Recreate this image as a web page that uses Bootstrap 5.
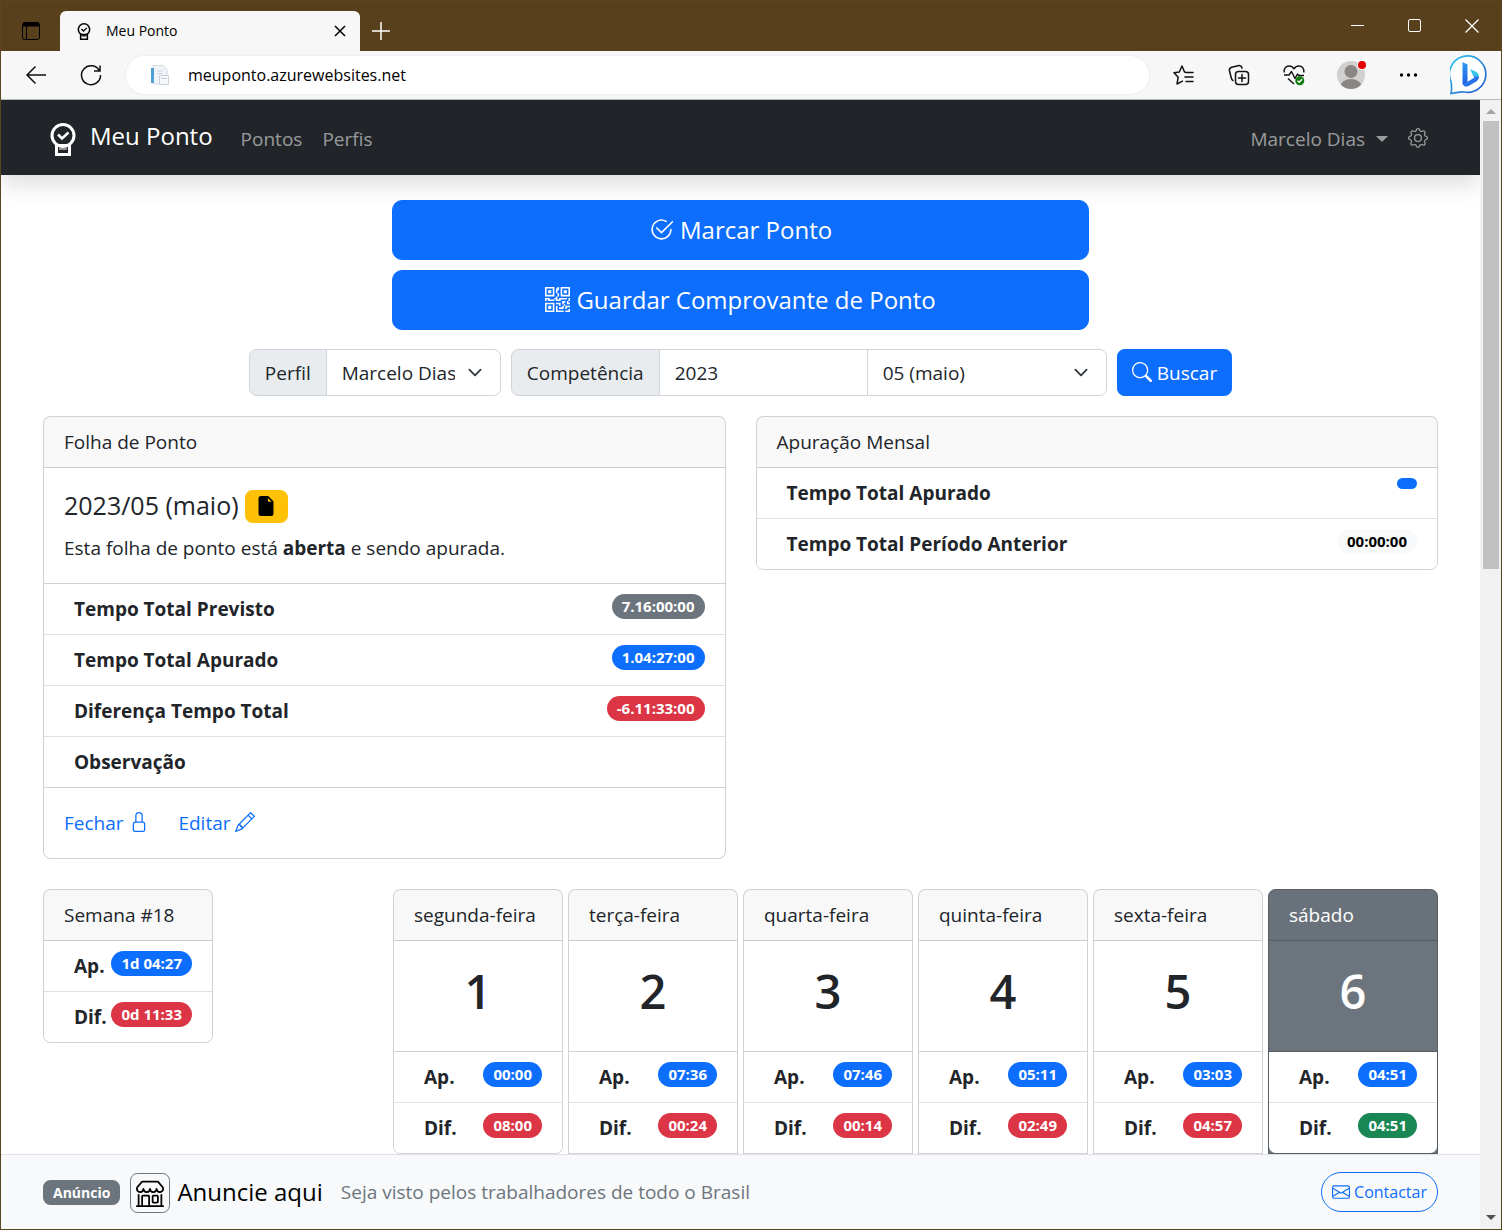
<!DOCTYPE html>
<html lang="pt-BR">
<head>
<meta charset="utf-8">
<meta name="viewport" content="width=device-width, initial-scale=1">
<title>Meu Ponto</title>
<link href="https://cdn.jsdelivr.net/npm/bootstrap@5.3.0/dist/css/bootstrap.min.css" rel="stylesheet">
<style>
:root { font-size: 20px; }
body { font-family: "Open Sans", "Noto Sans", sans-serif; font-size: 19px; line-height: 30px; }
.icon { width: 20px; height: 20px; fill: currentColor; vertical-align: -2px; }
.line-icon { fill: none; stroke: currentColor; }

/* Browser window */
.window-frame { height: 100vh; border: 1px solid #5b4520; }
.window-btn { background: none; border: 0; padding: 0; color: inherit; line-height: 0; }
.title-bar { height: 50px; background: #59401c; color: #fff; padding-right: 22px; }
.tab-menu { width: 59px; padding-left: 20px; }
.browser-tab { width: 300px; height: 40px; background: #f7f7f7; color: #000; border-radius: 6px 6px 0 0; font-size: 14px; padding: 0 13px 0 16px; }
.tab-label { margin-left: 14px; }
.new-tab { margin-left: 9px; padding-bottom: 8px; }
.window-controls { gap: 43px; }
.tool-bar { height: 49px; background: #f7f7f7; border-bottom: 1px solid #b9bcbf; padding: 0 13px 0 23px; color: #111; }
.nav-tools { gap: 31px; margin-right: 23px; }
.page-tools { gap: 31px; margin-left: 23px; }
.address-box { background: #fff; height: 38px; border-radius: 19px; padding-left: 22px; box-shadow: 0 0 3px rgba(0,0,0,.08); }
.address-box input { border: 0; outline: 0; background: none; font-size: 16px; line-height: 24px; color: #000; margin-left: 18px; }
.scroll-track { width: 21px; background: #f1f1f1; padding: 8px 2px 8px 3px; line-height: 0; }
.scroll-thumb { height: 448px; background: #c1c1c1; margin-top: 7px; }

/* Application */
.page-pad { padding-left: 42px; padding-right: 42px; }
.app-nav { height: 75px; padding-top: 12px; }
.app-nav .navbar-brand { font-size: 24px; line-height: 38px; margin-right: 18px; }
.brand-logo { width: 26px; height: 33px; margin: 2px 14px 0 7px; }
.app-nav .dropdown-toggle::after { margin-left: 11px; vertical-align: 4px; border-width: 6px 6px 0; }
.action-list { width: 50%; margin-top: 25px; }
.search-form { margin: 19px 0 20px; }
.summary-row { margin-bottom: 30px; }
.btn { --bs-btn-font-size: 19px; --bs-btn-line-height: 30px; }
.btn-lg { --bs-btn-font-size: 24px; --bs-btn-line-height: 38px; }
.btn-lg .icon { width: 25px; height: 25px; vertical-align: -3px; }
.search-btn { --bs-btn-padding-x: 14px; }
.input-group-text, .form-control, .form-select { font-size: 19px; line-height: 30px; padding-left: 15px; border-color: #ced4da; }
.input-group-text { padding-right: 15px; background: #e9ecef; }
.form-select { background-size: 20px 15px; }
.profile-group { width: 252px; }
.period-group { width: 596px; }
.year-field { max-width: 209px; }
.card-title { font-size: 25px; line-height: 35px; }
.title-badge { width: 43px; height: 33px; margin-left: 6px; }
.badge { font-size: 15px; line-height: 15px; padding: 5px 10px; }
.badge:empty { display: block; height: 11px; }
.list-group-item { --bs-list-group-border-color: #dee2e6; font-weight: 700; line-height: 30px; padding-left: 30px; }
.week-grid { display: grid; grid-template-columns: repeat(8, 1fr); gap: 5px; }
.day-number { font-size: 47px; line-height: 60px; font-weight: 600; }
.card-continued { border-bottom-left-radius: 0; border-bottom-right-radius: 0; }
.card-continued .list-group { border-radius: 0; }
.today-card { --bs-card-border-color: #565e64; }
.ad-bar { height: 75px; background: #f8f9fa; }
.ad-bar .ad-tag { font-size: 14px; }
.shop-box { width: 40px; height: 40px; border-color: #6c757d !important; margin: 2px 7px 0 10px; }
.ad-name { font-size: 24px; color: #000; margin-right: 18px; }
.contact-btn { --bs-btn-font-size: 16px; --bs-btn-padding-y: 4px; --bs-btn-padding-x: 10px; }
.contact-btn .icon { width: 18px; height: 18px; vertical-align: -3px; }
</style>
<script src="https://cdn.jsdelivr.net/npm/bootstrap@5.3.0/dist/js/bootstrap.bundle.min.js"></script>
</head>
<body>
<svg class="d-none">
  <symbol id="clock-logo" viewBox="0 0 26 33"><path d="M6.500 22.500h13v9h-13z" fill="none" stroke="currentColor" stroke-width="3"/><path d="M9 26h8" stroke="currentColor" stroke-width="1"/><circle cx="13" cy="12.500" r="11" fill="none" stroke="currentColor" stroke-width="3"/><path d="m8 11.500 4 4 6.500-6" fill="none" stroke="currentColor" stroke-width="2.500"/></symbol>
</svg>
<div class="window-frame d-flex flex-column overflow-hidden">
  <header>
    <div class="title-bar d-flex align-items-end">
      <button class="window-btn tab-menu align-self-center text-start pt-2 text-black" aria-label="Menu de guias"><svg width="20" height="20" viewBox="0 0 20 20" class="line-icon"><rect x="1.500" y="1.500" width="17" height="17" rx="2.500"/><path d="M2 3.500h16" stroke-width="4"/><path d="M5.500 5v13"/></svg></button>
      <div class="browser-tab d-flex align-items-center">
        <svg width="16" height="17"><use href="#clock-logo"/></svg>
        <span class="tab-label flex-grow-1">Meu Ponto</span>
        <button class="window-btn" aria-label="Fechar guia"><svg width="14" height="14" class="line-icon" stroke-width="1.500"><path d="m2 2 10 10M12 2 2 12"/></svg></button>
      </div>
      <button class="window-btn new-tab" aria-label="Nova guia"><svg width="24" height="24" class="line-icon" stroke-width="1.500"><path d="M12 3v18M3 12h18"/></svg></button>
      <div class="window-controls ms-auto d-flex align-self-center">
        <button class="window-btn" aria-label="Minimizar"><svg width="14" height="14" class="line-icon"><path d="M0 6.500h13"/></svg></button>
        <button class="window-btn" aria-label="Maximizar"><svg width="14" height="14" class="line-icon"><rect x=".5" y=".5" width="12" height="12" rx="1.500"/></svg></button>
        <button class="window-btn" aria-label="Fechar"><svg width="14" height="14" class="line-icon" stroke-width="1.300"><path d="m.5.5 13 13M13.500.5l-13 13"/></svg></button>
      </div>
    </div>
    <div class="tool-bar d-flex align-items-center">
      <div class="nav-tools d-flex">
        <button class="window-btn" aria-label="Voltar"><svg width="24" height="24" class="line-icon" stroke-width="1.500"><path d="M22 12H3M11.500 3.500 3 12l8.500 8.500"/></svg></button>
        <button class="window-btn" aria-label="Atualizar"><svg width="24" height="24" class="line-icon" stroke-width="1.500"><path d="M20.500 8A9.500 9.500 0 1 0 21.500 12M21 2.500V8h-6"/></svg></button>
      </div>
      <div class="address-box d-flex align-items-center flex-grow-1">
        <svg width="22" height="22"><path d="M5 1.500h10l4 4V20H5z" fill="#f1f4f9" stroke="#d5dae3"/><path d="M3 4h3v15H3z" fill="#4f9fd8"/><path d="M9 7h6M9 9.500h6" stroke="#cdd5e2"/><path d="M11.500 11.500h9v9h-9z" fill="#f6f8fb" stroke="#cad0dc"/><path d="M13 14.500h6" stroke="#c2cad8"/></svg>
        <input class="flex-grow-1 p-0" type="text" value="meuponto.azurewebsites.net" aria-label="Endereço">
      </div>
      <div class="page-tools d-flex align-items-center">
        <button class="window-btn" aria-label="Favoritos"><svg width="24" height="24" class="line-icon" stroke-width="1.500" stroke-linejoin="round" stroke-linecap="round"><path d="M14.500 9.500 12.500 9l-2.500-6-2.700 6-5.300.8 4.200 4.400L5 21l5.500-2.800M14.500 9.500H21M13 14h8M14 18.500h7"/></svg></button>
        <button class="window-btn" aria-label="Coleções"><svg width="24" height="24" class="line-icon" stroke-width="1.500" stroke-linecap="round"><rect x="8.500" y="8.500" width="13" height="13" rx="3"/><path d="M15 11.500v7M11.500 15h7M6 17.500C5 17 4.500 16 4.300 15L2.500 8C2 6 3 4.700 4.700 4.200L11 2.700c2-.5 3.500.3 4 2.500"/></svg></button>
        <button class="window-btn" aria-label="Desempenho"><svg width="24" height="24" class="line-icon" stroke-width="1.400" stroke-linejoin="round"><path d="M2.300 9.500C1.500 5.500 4 3 7 3c2.500 0 4 1.300 5 2.800C13 4.300 14.500 3 17 3c3 0 5.500 2.500 4.700 6.500M2 12h5l2.500-3.500 3.500 7 2.500-4.500 1 1.500H22M6 15.500l6 5.500"/><circle cx="17.800" cy="17.800" r="4.500" fill="#107c10" stroke="none"/><path d="m15.600 17.800 1.500 1.500 3-3" stroke="#fff"/></svg></button>
        <button class="window-btn" aria-label="Perfil do navegador"><svg width="29" height="30" class="my-n1"><clipPath id="avatar-clip"><circle cx="14" cy="15" r="14"/></clipPath><circle cx="14" cy="15" r="14" fill="#d2d0ce"/><g clip-path="url(#avatar-clip)" fill="#8a8684"><circle cx="14" cy="11.500" r="6.500"/><ellipse cx="14" cy="26.500" rx="10.500" ry="7.500"/></g><circle cx="25" cy="5" r="5" fill="#f7f7f7"/><circle cx="25" cy="5" r="4" fill="#e60000"/></svg></button>
        <button class="window-btn" aria-label="Mais opções"><svg width="22" height="24"><circle cx="4.500" cy="12" r="1.700"/><circle cx="11.500" cy="12" r="1.700"/><circle cx="18.500" cy="12" r="1.700"/></svg></button>
        <button class="window-btn" aria-label="Bing"><svg width="38" height="40" viewBox="0 0 38 40"><defs><linearGradient id="bubble" x1="0" y1="0" x2="1" y2="1"><stop offset="0" stop-color="#2fc8e8"/><stop offset="1" stop-color="#2456d0"/></linearGradient><linearGradient id="bing-b" x1="0" y1="0" x2="0" y2="1"><stop offset="0" stop-color="#2d9cf0"/><stop offset="1" stop-color="#2456e0"/></linearGradient></defs><path d="M1 38.500c.8-3 .8-6 .2-11.500A18.200 18.200 0 1 1 14 37c-4-.5-8 1-13 1.500z" fill="#fff" stroke="url(#bubble)" stroke-width="1.700"/><path d="m12.500 7 5 2.500V26l-2 6-3-3z" fill="url(#bing-b)"/><path d="m20 14 6.500 3q3 2 2.500 6l-6-2.500z" fill="#38c6e8"/><path d="M12.500 29q3 4 7 1.500l7.500-4.500q2-1.500 2-4L23 20.500l1.500 2-6.500 4z" fill="#2872ea"/></svg></button>
      </div>
    </div>
  </header>

  <div class="d-flex flex-grow-1 overflow-hidden">
    <div class="d-flex flex-column flex-grow-1 overflow-hidden">
      <nav class="navbar navbar-expand navbar-dark bg-dark shadow app-nav page-pad flex-shrink-0">
        <a class="navbar-brand d-flex align-items-center" href="#"><svg class="brand-logo"><use href="#clock-logo"/></svg><span class="pb-1">Meu Ponto</span></a>
        <ul class="navbar-nav flex-grow-1">
          <li class="nav-item"><a class="nav-link" href="#">Pontos</a></li>
          <li class="nav-item"><a class="nav-link" href="#">Perfis</a></li>
          <li class="nav-item dropdown ms-auto"><a class="nav-link dropdown-toggle" href="#" role="button" data-bs-toggle="dropdown">Marcelo Dias</a>
            <ul class="dropdown-menu dropdown-menu-end"><li><a class="dropdown-item" href="#">Sair</a></li></ul></li>
          <li class="nav-item"><a class="nav-link" href="#" aria-label="Configurações"><svg class="icon" viewBox="0 0 16 16"><path d="M8 4.754a3.246 3.246 0 1 0 0 6.492 3.246 3.246 0 0 0 0-6.492zM5.754 8a2.246 2.246 0 1 1 4.492 0 2.246 2.246 0 0 1-4.492 0z"/><path d="M9.796 1.343c-.527-1.790-3.065-1.790-3.592 0l-.094.319a.873.873 0 0 1-1.255.52l-.292-.16c-1.640-.892-3.433.902-2.540 2.541l.159.292a.873.873 0 0 1-.52 1.255l-.319.094c-1.790.527-1.790 3.065 0 3.592l.319.094a.873.873 0 0 1 .52 1.255l-.16.292c-.892 1.640.901 3.434 2.541 2.540l.292-.159a.873.873 0 0 1 1.255.52l.094.319c.527 1.790 3.065 1.790 3.592 0l.094-.319a.873.873 0 0 1 1.255-.52l.292.16c1.640.893 3.434-.902 2.540-2.541l-.159-.292a.873.873 0 0 1 .52-1.255l.319-.094c1.790-.527 1.790-3.065 0-3.592l-.319-.094a.873.873 0 0 1-.52-1.255l.16-.292c.893-1.640-.902-3.433-2.541-2.540l-.292.159a.873.873 0 0 1-1.255-.52l-.094-.319zm-2.633.283c.246-.835 1.428-.835 1.674 0l.094.319a1.873 1.873 0 0 0 2.693 1.115l.291-.16c.764-.415 1.600.42 1.184 1.185l-.159.292a1.873 1.873 0 0 0 1.116 2.692l.318.094c.835.246.835 1.428 0 1.674l-.319.094a1.873 1.873 0 0 0-1.115 2.693l.16.291c.415.764-.42 1.600-1.185 1.184l-.291-.159a1.873 1.873 0 0 0-2.693 1.116l-.094.318c-.246.835-1.428.835-1.674 0l-.094-.319a1.873 1.873 0 0 0-2.692-1.115l-.292.16c-.764.415-1.600-.42-1.184-1.185l.159-.291A1.873 1.873 0 0 0 1.945 8.930l-.319-.094c-.835-.246-.835-1.428 0-1.674l.319-.094A1.873 1.873 0 0 0 3.060 4.377l-.16-.292c-.415-.764.42-1.600 1.185-1.184l.292.159a1.873 1.873 0 0 0 2.692-1.115l.094-.319z"/></svg></a></li>
        </ul>
      </nav>

      <main class="page-pad flex-grow-1 overflow-hidden">
        <div class="action-list d-grid gap-2 mx-auto">
          <button class="btn btn-primary btn-lg"><svg class="icon" viewBox="0 0 16 16"><path d="M2.500 8a5.500 5.500 0 0 1 8.250-4.764.5.5 0 0 0 .5-.866A6.500 6.500 0 1 0 14.500 8a.5.5 0 0 0-1 0 5.500 5.500 0 1 1-11 0z"/><path d="M15.354 3.354a.5.5 0 0 0-.708-.708L8 9.293 5.354 6.646a.5.5 0 1 0-.708.708l3 3a.5.5 0 0 0 .708 0l7-7z"/></svg> Marcar Ponto</button>
          <button class="btn btn-primary btn-lg"><svg class="icon" viewBox="0 0 16 16"><path d="M2 2h2v2H2V2Z"/><path d="M6 0v6H0V0h6ZM5 1H1v4h4V1ZM4 12H2v2h2v-2Z"/><path d="M6 10v6H0v-6h6Zm-5 1v4h4v-4H1Zm11-9h2v2h-2V2Z"/><path d="M10 0v6h6V0h-6Zm5 1v4h-4V1h4ZM8 1V0h1v2H8v2H7V1h1Zm0 5V4h1v2H8ZM6 8V7h1V6h1v2h1V7h5v1h-4v1H7V8H6Zm0 0v1H2V8H1v1H0V7h3v1h3Zm10 1h-1V7h1v2Zm-1 0h-1v2h2v-1h-1V9Zm-4 0h2v1h-1v1h-1V9Zm2 3v-1h-1v1h-1v1H9v1h3v-2h1Zm0 0h3v1h-2v1h-1v-2Zm-4-1v1h1v-2H7v1h2Z"/><path d="M7 12h1v3h4v1H7v-4Zm9 2v2h-3v-1h2v-1h1Z"/></svg> Guardar Comprovante de Ponto</button>
        </div>

        <form class="search-form d-flex justify-content-center gap-2">
          <div class="input-group profile-group">
            <label class="input-group-text" for="perfil">Perfil</label>
            <select class="form-select" id="perfil"><option>Marcelo Dias</option></select>
          </div>
          <div class="input-group period-group">
            <label class="input-group-text" for="ano">Competência</label>
            <input class="form-control year-field" id="ano" type="text" value="2023">
            <select class="form-select" aria-label="Mês"><option>05 (maio)</option></select>
          </div>
          <button class="btn btn-primary search-btn" type="button"><svg class="icon" viewBox="0 0 16 16"><path d="M11.742 10.344a6.500 6.500 0 1 0-1.397 1.398h-.001c.03.04.062.078.098.115l3.850 3.850a1 1 0 0 0 1.415-1.414l-3.850-3.850a1.007 1.007 0 0 0-.115-.1zM12 6.500a5.500 5.500 0 1 1-11 0 5.500 5.500 0 0 1 11 0z"/></svg> Buscar</button>
        </form>

        <div class="row align-items-start summary-row">
          <div class="col-6">
            <section class="card">
              <div class="card-header">Folha de Ponto</div>
              <div class="card-body">
                <h5 class="card-title d-flex align-items-end mb-2">2023/05 (maio) <button class="title-badge btn btn-warning p-0 lh-1" type="button" aria-label="Folha"><svg class="icon" viewBox="0 0 16 16"><path d="M4 0h5.293A1 1 0 0 1 10 .293L13.707 4a1 1 0 0 1 .293.707V14a2 2 0 0 1-2 2H4a2 2 0 0 1-2-2V2a2 2 0 0 1 2-2zm5.500 1.500v2a1 1 0 0 0 1 1h2l-3-3z"/></svg></button></h5>
                <p class="card-text">Esta folha de ponto está <strong>aberta</strong> e sendo apurada.</p>
              </div>
              <ul class="list-group list-group-flush">
                <li class="list-group-item d-flex justify-content-between align-items-start">Tempo Total Previsto <span class="badge text-bg-secondary rounded-pill">7.16:00:00</span></li>
                <li class="list-group-item d-flex justify-content-between align-items-start">Tempo Total Apurado <span class="badge text-bg-primary rounded-pill">1.04:27:00</span></li>
                <li class="list-group-item d-flex justify-content-between align-items-start">Diferença Tempo Total <span class="badge text-bg-danger rounded-pill">-6.11:33:00</span></li>
                <li class="list-group-item">Observação</li>
              </ul>
              <div class="card-body">
                <a class="card-link text-decoration-none me-1" href="#">Fechar <svg class="icon" viewBox="0 0 16 16"><path d="M8 1a2 2 0 0 1 2 2v4.500H6V3a2 2 0 0 1 2-2zm3 6.500V3a3 3 0 0 0-6 0v4.500a2 2 0 0 0-2 2V14a2 2 0 0 0 2 2h6a2 2 0 0 0 2-2V9.500a2 2 0 0 0-2-2zm-6 1h6a1 1 0 0 1 1 1V14a1 1 0 0 1-1 1H5a1 1 0 0 1-1-1V9.500a1 1 0 0 1 1-1z"/></svg></a>
                <a class="card-link text-decoration-none" href="#">Editar <svg class="icon" viewBox="0 0 16 16"><path d="M12.146.146a.5.5 0 0 1 .708 0l3 3a.5.5 0 0 1 0 .708l-10 10a.5.5 0 0 1-.168.11l-5 2a.5.5 0 0 1-.65-.65l2-5a.5.5 0 0 1 .11-.168l10-10zM11.207 2.500 13.500 4.793 14.793 3.500 12.500 1.207 11.207 2.500zm1.586 3L10.500 3.207 4 9.707V10h.5a.5.5 0 0 1 .5.5v.5h.5a.5.5 0 0 1 .5.5v.5h.293l6.500-6.500zm-9.761 5.175-.106.106-1.528 3.821 3.821-1.528.106-.106A.5.5 0 0 1 5 12.500V12h-.5a.5.5 0 0 1-.5-.5V11h-.5a.5.5 0 0 1-.468-.325z"/></svg></a>
              </div>
            </section>
          </div>
          <div class="col-6">
            <section class="card">
              <div class="card-header">Apuração Mensal</div>
              <ul class="list-group list-group-flush">
                <li class="list-group-item d-flex justify-content-between align-items-start">Tempo Total Apurado <span class="badge text-bg-primary rounded-pill"></span></li>
                <li class="list-group-item d-flex justify-content-between align-items-start">Tempo Total Período Anterior <span class="badge text-bg-light text-black rounded-pill">00:00:00</span></li>
              </ul>
            </section>
          </div>
        </div>

        <div class="week-grid align-items-start">
          <section class="card">
            <div class="card-header">Semana #18</div>
            <ul class="list-group list-group-flush">
              <li class="list-group-item d-flex justify-content-between align-items-start">Ap. <span class="badge text-bg-primary rounded-pill">1d 04:27</span></li>
              <li class="list-group-item d-flex justify-content-between align-items-start">Dif. <span class="badge text-bg-danger rounded-pill">0d 11:33</span></li>
            </ul>
          </section>
          <div></div>
          <section class="card">
            <div class="card-header">segunda-feira</div>
            <div class="card-body text-center"><h1 class="day-number mb-2">1</h1></div>
            <ul class="list-group list-group-flush">
              <li class="list-group-item d-flex justify-content-between align-items-start">Ap. <span class="badge text-bg-primary rounded-pill">00:00</span></li>
              <li class="list-group-item d-flex justify-content-between align-items-start">Dif. <span class="badge text-bg-danger rounded-pill">08:00</span></li>
            </ul>
          </section>
          <section class="card card-continued">
            <div class="card-header">terça-feira</div>
            <div class="card-body text-center"><h1 class="day-number mb-2">2</h1></div>
            <ul class="list-group list-group-flush">
              <li class="list-group-item d-flex justify-content-between align-items-start">Ap. <span class="badge text-bg-primary rounded-pill">07:36</span></li>
              <li class="list-group-item d-flex justify-content-between align-items-start">Dif. <span class="badge text-bg-danger rounded-pill">00:24</span></li>
            </ul>
          </section>
          <section class="card card-continued">
            <div class="card-header">quarta-feira</div>
            <div class="card-body text-center"><h1 class="day-number mb-2">3</h1></div>
            <ul class="list-group list-group-flush">
              <li class="list-group-item d-flex justify-content-between align-items-start">Ap. <span class="badge text-bg-primary rounded-pill">07:46</span></li>
              <li class="list-group-item d-flex justify-content-between align-items-start">Dif. <span class="badge text-bg-danger rounded-pill">00:14</span></li>
            </ul>
          </section>
          <section class="card card-continued">
            <div class="card-header">quinta-feira</div>
            <div class="card-body text-center"><h1 class="day-number mb-2">4</h1></div>
            <ul class="list-group list-group-flush">
              <li class="list-group-item d-flex justify-content-between align-items-start">Ap. <span class="badge text-bg-primary rounded-pill">05:11</span></li>
              <li class="list-group-item d-flex justify-content-between align-items-start">Dif. <span class="badge text-bg-danger rounded-pill">02:49</span></li>
            </ul>
          </section>
          <section class="card card-continued">
            <div class="card-header">sexta-feira</div>
            <div class="card-body text-center"><h1 class="day-number mb-2">5</h1></div>
            <ul class="list-group list-group-flush">
              <li class="list-group-item d-flex justify-content-between align-items-start">Ap. <span class="badge text-bg-primary rounded-pill">03:03</span></li>
              <li class="list-group-item d-flex justify-content-between align-items-start">Dif. <span class="badge text-bg-danger rounded-pill">04:57</span></li>
            </ul>
          </section>
          <section class="card card-continued today-card text-bg-secondary">
            <div class="card-header">sábado</div>
            <div class="card-body text-center"><h1 class="day-number mb-2">6</h1></div>
            <ul class="list-group list-group-flush">
              <li class="list-group-item d-flex justify-content-between align-items-start">Ap. <span class="badge text-bg-primary rounded-pill">04:51</span></li>
              <li class="list-group-item d-flex justify-content-between align-items-start">Dif. <span class="badge text-bg-success rounded-pill">04:51</span></li>
            </ul>
          </section>
        </div>
      </main>

      <footer class="ad-bar page-pad border-top d-flex align-items-center flex-shrink-0">
        <span class="badge ad-tag text-bg-secondary">Anúncio</span>
        <span class="shop-box border rounded d-flex align-items-center justify-content-center text-black"><svg width="28" height="28" fill="currentColor" viewBox="0 0 16 16"><path d="M2.970 1.350A1 1 0 0 1 3.730 1h8.540a1 1 0 0 1 .76.35l2.609 3.044A1.500 1.500 0 0 1 16 5.370v.255a2.375 2.375 0 0 1-4.250 1.458A2.371 2.371 0 0 1 9.875 8 2.370 2.370 0 0 1 8 7.083 2.370 2.370 0 0 1 6.125 8a2.370 2.370 0 0 1-1.875-.917A2.375 2.375 0 0 1 0 5.625V5.370a1.500 1.500 0 0 1 .361-.976l2.610-3.045zm1.780 4.275a1.375 1.375 0 0 0 2.750 0 .5.5 0 0 1 1 0 1.375 1.375 0 0 0 2.750 0 .5.5 0 0 1 1 0 1.375 1.375 0 1 0 2.750 0V5.370a.5.5 0 0 0-.12-.325L12.270 2H3.730L1.120 5.045A.5.5 0 0 0 1 5.370v.255a1.375 1.375 0 0 0 2.750 0 .5.5 0 0 1 1 0zM1.500 8.500A.5.5 0 0 1 2 9v6h1v-5a1 1 0 0 1 1-1h3a1 1 0 0 1 1 1v5h6V9a.5.5 0 0 1 1 0v6h.5a.5.5 0 0 1 0 1H.5a.5.5 0 0 1 0-1H1V9a.5.5 0 0 1 .5-.5zM4 15h3v-5H4v5zm5-5a1 1 0 0 1 1-1h2a1 1 0 0 1 1 1v3a1 1 0 0 1-1 1h-2a1 1 0 0 1-1-1v-3zm3 0h-2v3h2v-3z"/></svg></span>
        <span class="ad-name">Anuncie aqui</span>
        <span class="text-secondary flex-grow-1">Seja visto pelos trabalhadores de todo o Brasil</span>
        <button class="btn btn-outline-primary rounded-pill contact-btn"><svg class="icon" viewBox="0 0 16 16"><path d="M0 4a2 2 0 0 1 2-2h12a2 2 0 0 1 2 2v8a2 2 0 0 1-2 2H2a2 2 0 0 1-2-2V4Zm2-1a1 1 0 0 0-1 1v.217l7 4.200 7-4.200V4a1 1 0 0 0-1-1H2Zm13 2.383-4.708 2.825L15 11.105V5.383Zm-.034 6.876-5.640-3.471L8 9.583l-1.326-.795-5.640 3.470A1 1 0 0 0 2 13h12a1 1 0 0 0 .966-.741ZM1 11.105l4.708-2.897L1 5.383v5.722Z"/></svg> Contactar</button>
      </footer>
    </div>
    <div class="scroll-track d-flex flex-column flex-shrink-0" aria-hidden="true">
      <svg class="mx-auto" width="10" height="6"><path d="m0 6 5-5 5 5z" fill="#a3a3a3"/></svg>
      <div class="scroll-thumb"></div>
      <svg class="mx-auto mt-auto" width="10" height="6"><path d="m0 0 5 5 5-5z" fill="#505050"/></svg>
    </div>
  </div>
</div>
</body>
</html>
